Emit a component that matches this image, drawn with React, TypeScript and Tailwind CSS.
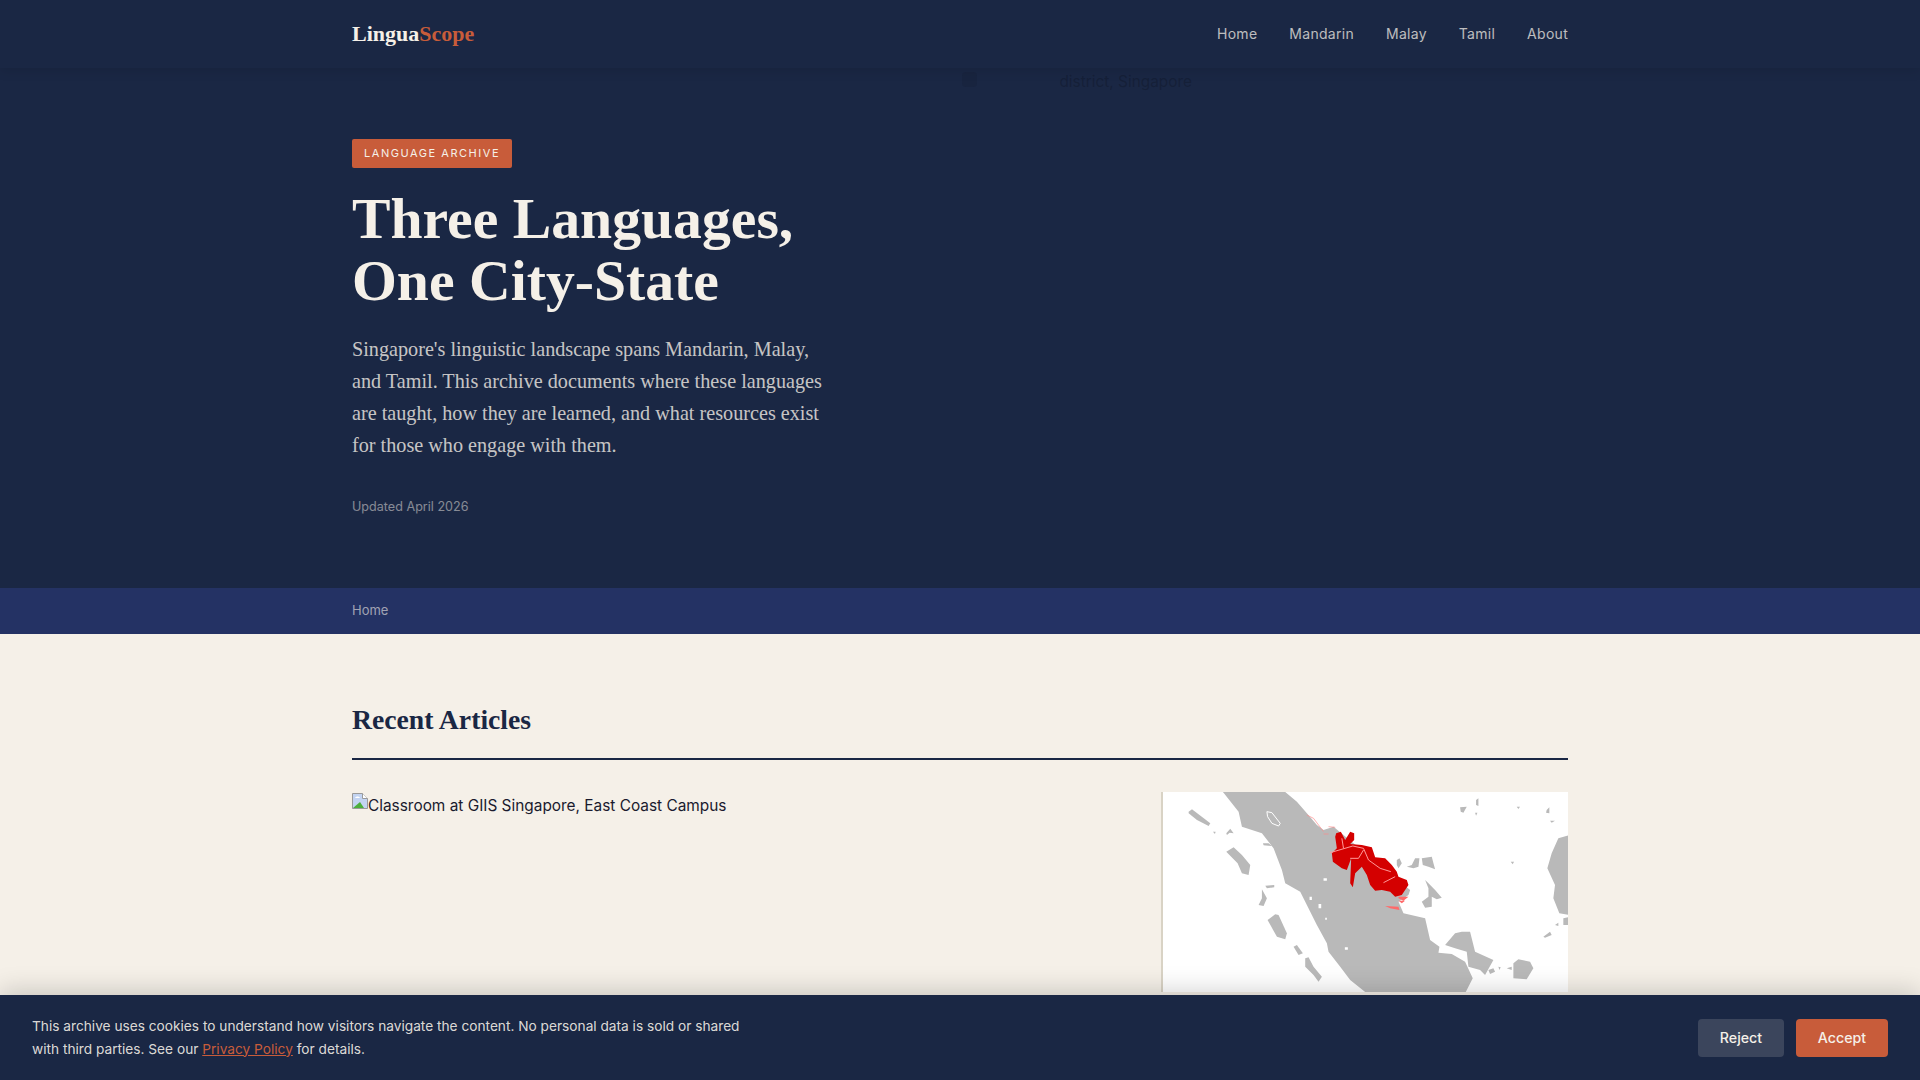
import React from "react";

const serif = "font-['Liberation_Serif',serif]";
const sans = "font-['Inter',sans-serif]";

function BrokenImage() {
  return (
    <svg width="16" height="16" viewBox="0 0 16 16" className="inline-block align-[2px]">
      <path d="M0.5 0.5H10.5L15.5 5.5V15.5H0.5Z" fill="#c3d4f2" stroke="#9a9a9a" />
      <path d="M10.5 0.5V5.5H15.5" fill="#fff" stroke="#9a9a9a" />
      <path d="M3 5c1-2 4-2 5 0z" fill="#fff" />
      <path d="M1 15L8 9l4 6z" fill="#4caf3c" />
    </svg>
  );
}

const land = [
  // Sumatra
  "M218 66L405 66L440 95L470 130L500 165L520 180L550 170L780 360L775 375L745 395L760 430L825 445L840 510L868 530L865 548L905 552L945 575L968 625L945 670L650 670L600 630L570 590L535 545L530 520L500 465L450 365L405 340L395 300L370 235L335 190L275 170L265 125Z",
  // west coast islands
  "M115 125L125 118L180 160L175 168L140 150L115 130Z",
  "M188 185L196 185L194 192ZM228 190L240 176L250 190L238 188L230 195Z",
  "M338 220L355 220L365 228L340 226Z",
  "M228 245L250 232L275 255L300 285L295 315L275 310L262 280Z",
  "M345 347L372 345L372 352L350 355Z",
  "M335 358L350 385L340 408L325 405L335 385Z",
  "M352 450L375 433L385 435L410 490L405 508L380 500Z",
  "M430 530L440 525L458 550L445 555Z",
  "M465 565L475 562L490 590L515 620L505 635L490 615L465 590Z",
  // Bangka, Belitung
  "M885 525L915 490L935 485L960 485L975 545L1030 570L1005 615L990 600L955 590L950 545L915 535Z",
  "M1015 600L1030 595L1035 605L1020 612ZM1045 590L1052 592L1048 600ZM1070 595L1085 590L1085 600Z",
  "M1090 580L1105 568L1140 575L1150 595L1130 628L1090 625Z",
  // Borneo
  "M1260 195L1225 205L1205 250L1192 295L1215 345L1210 385L1228 430L1260 435Z",
  "M1240 445L1260 440L1260 465L1240 465Z",
  "M1180 500L1200 485L1205 495L1185 503ZM1215 465L1225 458L1225 468Z",
  // Natuna and the small northern islands
  "M930 112L950 110L940 128L932 125ZM978 90L985 85L985 108L978 105ZM975 128L982 128L978 137ZM1100 110L1110 110L1105 117ZM1190 120L1198 112L1198 130L1188 128ZM1200 152L1215 152L1205 158ZM1082 275L1092 275L1088 283Z",
  // Riau and Lingga
  "M740 270L748 265L755 280L745 295L740 285ZM770 290L785 285L795 265L808 265L805 290L790 295ZM815 265L845 260L850 280L855 298L835 290L818 285Z",
  "M825 330L835 340L855 360L875 383L860 388L845 380L845 410L825 413L815 395L835 380L835 355Z",
];

function MapPicture() {
  return (
    <svg viewBox="38 66 1216 600" preserveAspectRatio="none" className="block w-full h-full blur-[0.4px]">
      <rect x="20" y="40" width="1260" height="640" fill="#fff" />
      {land.map((d, i) => (
        <path key={i} d={d} fill="#b9b9b9" />
      ))}
      <path d="M350 125L365 128L390 160L385 168L365 160L352 140Z" fill="none" stroke="#fff" strokeWidth="3" />
      <path d="M520 325h10v7h-10zM478 380h7v10h-7zM505 402h8v13h-8zM525 443h5v6h-5zM584 532h9v7h-9z" fill="#fff" />
      <path
        d="M558 190L572 185L585 210L600 185L612 190L612 210L600 222L635 225L665 232L675 262L705 265L725 285L740 305L745 320L770 330L775 345L755 375L735 380L720 365L695 360L675 362L660 345L650 315L635 290L615 310L608 352L600 340L603 265L590 300L575 295L548 275L545 250L560 235L555 200Z"
        fill="#d40000"
      />
      <path
        d="M540 248L608 228L640 235L655 270L690 295L722 305M700 338L735 320M600 265L625 265L640 240M575 205L580 235"
        fill="none"
        stroke="#ff9a9a"
        strokeWidth="3"
      />
      <path d="M470 135L490 145L520 185M520 192L535 192M535 170L555 172" fill="none" stroke="#ff8a8a" strokeWidth="2" />
      <path d="M745 380L775 380L760 392L745 385ZM745 392L765 392L755 400ZM705 408L745 410L748 420L720 415Z" fill="#ff6a6a" />
    </svg>
  );
}

export default function App() {
  return (
    <div className={`h-[1080px] overflow-hidden relative bg-[#f5f0e8] ${sans}`}>
      <header className="relative z-10 h-[68px] bg-[#1a2744] shadow-[0_2px_12px_rgba(0,0,0,0.12)]">
        <div className="w-[1216px] mx-auto h-full flex items-center justify-between">
          <div className={`${serif} font-bold text-[22px] text-[#f5f0e8] -translate-y-px`}>
            Lingua<span className="text-[#c85c3a]">Scope</span>
          </div>
          <nav className="flex gap-8 text-[14px] text-[#f5f0e8]/75 tracking-[0.02em] -translate-y-px">
            <span>Home</span>
            <span>Mandarin</span>
            <span>Malay</span>
            <span>Tamil</span>
            <span>About</span>
          </nav>
        </div>
      </header>

      <section className="relative h-[520px] bg-[#1a2744]">
        {/* hero photo never loaded: its alt text shows through the overlay */}
        <div className="absolute left-[962px] top-[6px] flex items-center gap-[1px] text-[15.4px] leading-[16px] text-[#0f1526]/40">
          <div className="w-[15px] h-[15px] rounded-sm bg-[#0f1526]/15 -translate-y-[3px]" />
          <span className="w-[214px] text-right whitespace-nowrap">district, Singapore</span>
        </div>
        <div className="w-[1216px] mx-auto pt-[71px]">
          <div className="inline-block rounded-[2px] bg-[#c85c3a] px-3 py-[6px] text-[11px] leading-[17px] font-normal tracking-[0.14em] text-[#f5f0e8]">
            LANGUAGE ARCHIVE
          </div>
          <h1 className={`${serif} font-bold text-[57.7px] leading-[62px] mt-[20px] text-[#f5f0e8]`}>
            Three Languages,
            <br />
            One City-State
          </h1>
          <p className={`${serif} w-[480px] mt-[21px] text-[20.2px] leading-[32px] text-[#f5f0e8]/80`}>
            Singapore's linguistic landscape spans Mandarin, Malay, and Tamil. This archive documents where these languages are taught, how they are learned, and what resources exist for those who engage with them.
          </p>
          <div className="mt-[36px] text-[12.6px] leading-[20px] text-[#f5f0e8]/50">Updated April 2026</div>
        </div>
      </section>

      <div className="h-[46px] bg-[#243264] flex items-center">
        <div className="w-[1216px] mx-auto text-[13px] text-[#f5f0e8]/60">Home</div>
      </div>

      <main className="w-[1216px] mx-auto pt-[66px]">
        <h2 className={`${serif} font-bold text-[27.7px] leading-[40px] text-[#1a2744] pb-[18px] border-b-2 border-[#1a2744]`}>
          Recent Articles
        </h2>
        <div className="mt-[32px] flex">
          <div className="w-[809px] text-[15.4px] leading-[28px] text-[#1a1a2e]">
            <BrokenImage />
            Classroom at GIIS Singapore, East Coast Campus
          </div>
          <div className="w-[407px] h-[200px] border-l-2 border-[#d9d3c5] bg-white overflow-hidden">
            <MapPicture />
          </div>
        </div>
      </main>

      <div className="absolute bottom-0 left-0 right-0 h-[85px] bg-[#1a2744] shadow-[0_-4px_24px_rgba(0,0,0,0.18)] pl-8 pr-8 flex items-center justify-between">
        <p className="w-[720px] text-[13.7px] leading-[23px] text-[#f5f0e8]/90">
          This archive uses cookies to understand how visitors navigate the content. No personal data is sold or shared with third parties. See our{" "}
          <span className="text-[#c85c3a] underline">Privacy Policy</span> for details.
        </p>
        <div className="flex gap-3">
          <button className="h-[38px] w-[86px] rounded-[4px] bg-[#f5f0e8]/15 text-[14.2px] font-medium text-[#f5f0e8]">Reject</button>
          <button className="h-[38px] w-[92px] rounded-[4px] bg-[#c85c3a] text-[14.2px] font-medium text-[#f5f0e8]">Accept</button>
        </div>
      </div>
    </div>
  );
}
